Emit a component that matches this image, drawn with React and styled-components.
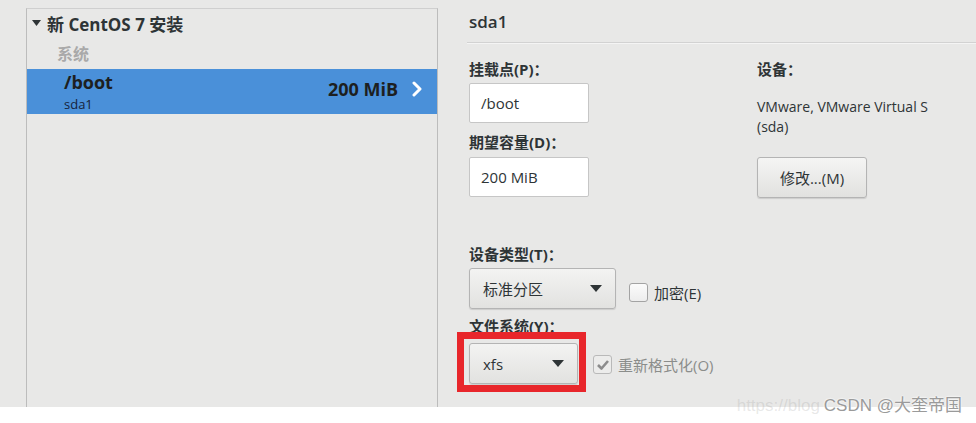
import React from 'react';
import styled, { createGlobalStyle } from 'styled-components';

const GlobalStyle = createGlobalStyle`
  body {
    margin: 0;
    background: #ffffff;
    font-family: "Open Sans", "Noto Sans", "Noto Sans CJK SC", sans-serif;
    color: #2e3436;
  }
`;

const Page = styled.div`
  position: relative;
  height: 423px;
  display: flex;
  flex-direction: column;
  background: #ffffff;
`;

const Screen = styled.div`
  display: flex;
  height: 407px;
  flex-shrink: 0;
  background: #e8e8e7;
`;

const LeftArea = styled.div`
  padding: 8px 0 0 26px;
`;

const PartitionList = styled.div`
  width: 410px;
  height: 398px;
  border: 1px solid #bcbcbc;
  border-bottom: none;
  border-top-color: #cfcfcf;
  display: flex;
  flex-direction: column;
`;

const GroupHeader = styled.div`
  display: flex;
  align-items: center;
  gap: 6px;
  height: 28px;
  padding-left: 5px;
  font-size: 17px;
  font-weight: 700;
  font-family: "Open Sans", "Noto Sans CJK SC", sans-serif;
`;

const SubHeader = styled.div`
  height: 32px;
  line-height: 32px;
  padding-left: 30px;
  font-size: 16px;
  color: #a9a9a9;
  font-weight: 600;
  font-family: "Noto Sans CJK SC", sans-serif;
`;

const MountRow = styled.div`
  display: flex;
  align-items: center;
  justify-content: space-between;
  height: 45px;
  padding: 0 14px 0 37px;
  background: #4a90d9;
`;

const MountInfo = styled.div`
  display: flex;
  flex-direction: column;
`;

const MountName = styled.span`
  font-size: 18px;
  font-weight: 700;
  line-height: 25px;
  color: #1d1f21;
`;

const MountDev = styled.span`
  font-size: 13px;
  line-height: 18px;
  color: #16233b;
`;

const MountSize = styled.div`
  display: flex;
  align-items: center;
  gap: 13px;
  margin-top: -6px;
  font-size: 18px;
  font-weight: 700;
  color: #1d1f21;
`;

const RightArea = styled.div`
  flex: 1;
  margin-left: 29px;
  display: flex;
  flex-direction: column;
`;

const DetailHeader = styled.div`
  height: 42px;
  line-height: 44px;
  padding-left: 2px;
  font-size: 17px;
  font-weight: 600;
  border-bottom: 1px solid #d2d2d2;
  box-shadow: 0 1px 0 #f4f4f4;
`;

const Columns = styled.div`
  display: grid;
  grid-template-columns: 288px 1fr;
  padding: 16px 0 0 2px;
`;

const Column = styled.div`
  display: flex;
  flex-direction: column;
`;

const Field = styled.div`
  display: flex;
  flex-direction: column;
  gap: ${p => p.$gap || 4}px;
  margin-top: ${p => p.$top || 0}px;
`;

const Label = styled.div`
  position: relative;
  height: 20px;
  line-height: 20px;
  font-size: 15px;
  font-weight: 700;
  font-family: "Open Sans", "Noto Sans CJK SC", sans-serif;
`;

const Entry = styled.div`
  box-sizing: border-box;
  width: 120px;
  height: 40px;
  padding-left: 11px;
  line-height: 38px;
  font-size: 15px;
  background: #ffffff;
  border: 1px solid #c6c6c6;
  border-radius: 2px;
`;

const DeviceText = styled.div`
  margin-top: 18px;
  font-size: 14px;
  line-height: 20px;
  color: #2e3436;
`;

const Button = styled.div`
  box-sizing: border-box;
  width: 110px;
  height: 41px;
  margin-top: 20px;
  display: flex;
  align-items: center;
  justify-content: center;
  font-size: 15px;
  font-family: "Open Sans", "Noto Sans CJK SC", sans-serif;
  border: 1px solid #b4b4b4;
  border-radius: 3px;
  background: linear-gradient(#f5f5f4, #e1e1df);
  box-shadow: 0 1px 1px rgba(0, 0, 0, 0.12);
`;

const ControlRow = styled.div`
  display: flex;
  align-items: center;
  gap: ${p => p.$gap}px;
`;

const Dropdown = styled.div`
  position: relative;
  box-sizing: border-box;
  width: ${p => p.$width}px;
  height: 41px;
  padding: 0 13px;
  display: flex;
  align-items: center;
  justify-content: space-between;
  font-size: 15px;
  font-family: "Open Sans", "Noto Sans CJK SC", sans-serif;
  border: 1px solid #b4b4b4;
  border-radius: 3px;
  background: linear-gradient(#f3f3f2, #e2e2e0);
  box-shadow: 0 1px 1px rgba(0, 0, 0, 0.12);
`;

const Highlight = styled.div`
  position: absolute;
  left: -13px;
  top: -12px;
  right: -9px;
  bottom: -9px;
  border: 7px solid #e8262b;
  pointer-events: none;
`;

const Check = styled.label`
  display: flex;
  align-items: center;
  gap: 6px;
  margin-top: ${p => p.$offset || 0}px;
  font-size: 15px;
  font-family: "Open Sans", "Noto Sans CJK SC", sans-serif;
  color: ${p => (p.$disabled ? '#8b8d8b' : '#2e3436')};
`;

const Box = styled.span`
  box-sizing: border-box;
  width: 19px;
  height: 19px;
  display: flex;
  align-items: center;
  justify-content: center;
  border: 1px solid ${p => (p.$disabled ? '#b9b9b9' : '#a3a3a3')};
  border-radius: 3px;
  background: ${p => (p.$disabled ? '#ececeb' : 'linear-gradient(#fbfbfb, #ededed)')};
`;

const Watermark = styled.div`
  position: absolute;
  right: 14px;
  top: 394px;
  display: flex;
  align-items: center;
  gap: 4px;
  height: 24px;
  font-size: 17px;
  line-height: 24px;
  font-family: "Liberation Sans", "Noto Sans CJK SC", sans-serif;
  color: #9a9a9a;
  text-shadow: 0 0 2px #fff, 0 0 2px #fff;
`;

const Faint = styled.span`
  color: rgba(150, 150, 150, 0.22);
  text-shadow: none;
`;

function Arrow() {
  return (
    <svg width="12" height="7" viewBox="0 0 12 7">
      <polygon points="0,0 12,0 6,7" fill="#2e3436" />
    </svg>
  );
}

function Chevron() {
  return (
    <svg width="12" height="16" viewBox="0 0 12 16">
      <polyline points="3,2 9,8 3,14" fill="none" stroke="#ffffff" strokeWidth="3" strokeLinejoin="round" strokeLinecap="round" />
    </svg>
  );
}

function Expander() {
  return (
    <svg width="9" height="6" viewBox="0 0 9 6">
      <polygon points="0,0 9,0 4.5,6" fill="#2e3436" />
    </svg>
  );
}

function Tick() {
  return (
    <svg width="14" height="12" viewBox="0 0 14 12">
      <polyline points="2,6 5.5,9.5 12,2" fill="none" stroke="#8c8c8c" strokeWidth="2.6" strokeLinejoin="round" />
    </svg>
  );
}

export default function App() {
  return (
    <Page>
      <GlobalStyle />
      <Screen>
        <LeftArea>
          <PartitionList>
            <GroupHeader>
              <Expander />
              <span>新 CentOS 7 安装</span>
            </GroupHeader>
            <SubHeader>系统</SubHeader>
            <MountRow>
              <MountInfo>
                <MountName>/boot</MountName>
                <MountDev>sda1</MountDev>
              </MountInfo>
              <MountSize>
                <span>200 MiB</span>
                <Chevron />
              </MountSize>
            </MountRow>
          </PartitionList>
        </LeftArea>

        <RightArea>
          <DetailHeader>sda1</DetailHeader>
          <Columns>
            <Column>
              <Field>
                <Label>挂载点(P)：</Label>
                <Entry>/boot</Entry>
              </Field>
              <Field $top={9} $gap={5}>
                <Label>期望容量(D)：</Label>
                <Entry>200 MiB</Entry>
              </Field>
              <Field $top={47}>
                <Label>设备类型(T)：</Label>
                <ControlRow $gap={13}>
                  <Dropdown $width={147}>
                    <span>标准分区</span>
                    <Arrow />
                  </Dropdown>
                  <Check $offset={8}>
                    <Box />
                    加密(E)
                  </Check>
                </ControlRow>
              </Field>
              <Field $top={7} $gap={7}>
                <Label>文件系统(Y)：</Label>
                <ControlRow $gap={15}>
                  <Dropdown $width={109}>
                    <span>xfs</span>
                    <Arrow />
                    <Highlight />
                  </Dropdown>
                  <Check $disabled $offset={2}>
                    <Box $disabled>
                      <Tick />
                    </Box>
                    重新格式化(O)
                  </Check>
                </ControlRow>
              </Field>
            </Column>
            <Column>
              <Label>设备：</Label>
              <DeviceText>
                VMware, VMware Virtual S
                <br />
                (sda)
              </DeviceText>
              <Button>修改...(M)</Button>
            </Column>
          </Columns>
        </RightArea>
      </Screen>

      <Watermark>
        <Faint>https://blog</Faint>
        <span>CSDN @大奎帝国</span>
      </Watermark>
    </Page>
  );
}
